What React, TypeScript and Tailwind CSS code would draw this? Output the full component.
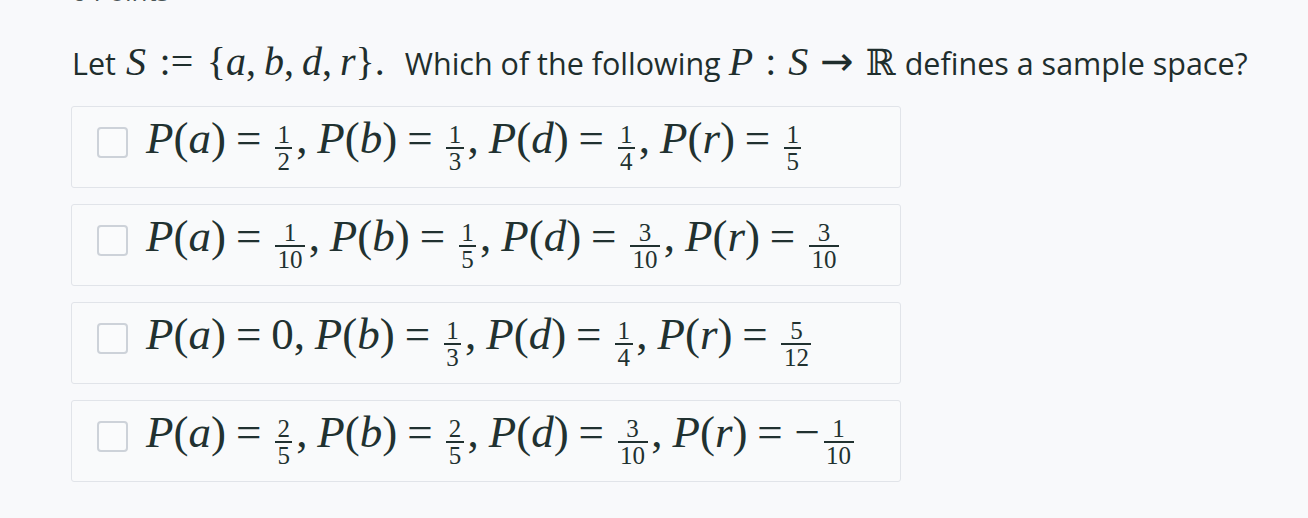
import React from "react";

const serif = { fontFamily: '"Liberation Serif", "DejaVu Serif", serif' };

function V({ children }: { children: React.ReactNode }) {
  return <span className="italic">{children}</span>;
}

function Eq() {
  return <span className="mx-[0.22em]">=</span>;
}

function Comma({ wide }: { wide?: boolean }) {
  return <span className={wide ? "mr-[0.2em]" : "mr-[0.22em]"}>,</span>;
}

function Frac({ n, d }: { n: string; d: string }) {
  return (
    <span className="inline-flex flex-col items-center align-[10px] text-[25px] leading-none mx-[0.15em]">
      <span className="px-[0.1em]">{n}</span>
      <span className="block h-[1.6px] w-full bg-current"></span>
      <span className="px-[0.1em]">{d}</span>
    </span>
  );
}

function P({ x }: { x: string }) {
  return (
    <>
      <V>P</V>
      <span>(</span>
      <V>{x}</V>
      <span>)</span>
    </>
  );
}

type Val = { n: string; d: string; neg?: boolean } | string;

function Value({ v }: { v: Val }) {
  if (typeof v === "string") return <span>{v}</span>;
  return (
    <>
      {v.neg && <span className="ml-[0.04em]">−</span>}
      <Frac n={v.n} d={v.d} />
    </>
  );
}

function Option({ vals }: { vals: Val[] }) {
  const keys = ["a", "b", "d", "r"];
  return (
    <div className="flex h-[82px] w-[830px] items-center rounded-[3px] border border-[#e1e4e9] bg-[#f9fafb] pl-[25px]">
      <span className="-mt-[9px] block h-[31px] w-[31px] shrink-0 rounded-[4px] border-2 border-[#cdd2d9] bg-[#fafbfc]"></span>
      <span className="ml-[18px] -mt-[4px] text-[45px] leading-none whitespace-nowrap text-[#213130]" style={serif}>
        {keys.map((k, i) => (
          <React.Fragment key={k}>
            <P x={k} />
            <Eq />
            <Value v={vals[i]} />
            {i < 3 && <Comma />}
          </React.Fragment>
        ))}
      </span>
    </div>
  );
}

export default function App() {
  return (
    <div className="min-h-[518px] w-full overflow-hidden bg-[#f8f9fb] text-[#1f2e2d]" style={{ fontFamily: '"Open Sans", "Lato", sans-serif' }}>
      <div className="pl-[72px]">
        <div className="-mt-[22px] h-[27px] text-[26px] leading-[26px] text-[#4a5556]">0 Points</div>
        <div className="mt-[36px] flex items-baseline whitespace-nowrap text-[30.5px] leading-[40px]">
          <span>Let</span>
          <span className="ml-[10px] text-[40px]" style={serif}>
            <V>S</V>
            <span className="mx-[0.34em]">:=</span>
            <span>{"{"}</span>
            <V>a</V>
            <Comma wide />
            <V>b</V>
            <Comma wide />
            <V>d</V>
            <Comma wide />
            <V>r</V>
            <span>{"}"}</span>
            <span>.</span>
          </span>
          <span className="ml-[20px]">Which of the following</span>
          <span className="ml-[8px] text-[40px]" style={serif}>
            <V>P</V>
            <span className="mx-[0.3em]">:</span>
            <V>S</V>
            <span className="mx-[0.3em] text-[40px]" style={{ fontFamily: '"DejaVu Sans", sans-serif' }}>→</span>
            <span className="text-[36px]" style={{ fontFamily: '"DejaVu Serif", serif' }}>ℝ</span>
          </span>
          <span className="ml-[9px]">defines a sample space?</span>
        </div>
      </div>
      <div className="mt-[23px] flex flex-col gap-[16px] pl-[71px]">
        <Option vals={[{ n: "1", d: "2" }, { n: "1", d: "3" }, { n: "1", d: "4" }, { n: "1", d: "5" }]} />
        <Option vals={[{ n: "1", d: "10" }, { n: "1", d: "5" }, { n: "3", d: "10" }, { n: "3", d: "10" }]} />
        <Option vals={["0", { n: "1", d: "3" }, { n: "1", d: "4" }, { n: "5", d: "12" }]} />
        <Option vals={[{ n: "2", d: "5" }, { n: "2", d: "5" }, { n: "3", d: "10" }, { n: "1", d: "10", neg: true }]} />
      </div>
    </div>
  );
}
